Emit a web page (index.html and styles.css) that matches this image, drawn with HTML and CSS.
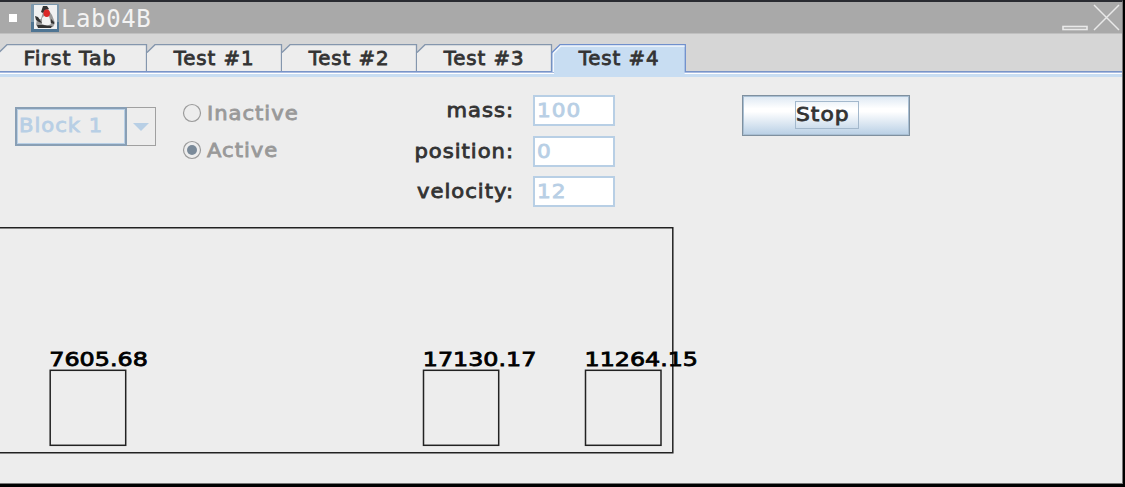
FILE: index.html
```html
<!DOCTYPE html>
<html lang="en">
<head>
<meta charset="utf-8">
<title>Lab04B</title>
<link rel="stylesheet" href="styles.css">
</head>
<body>
<div class="window">
  <header class="titlebar">
    <span class="dot"></span>
    <svg class="app-icon" width="28" height="28" viewBox="0 0 28 28">
      <rect x="0" y="0" width="28" height="28" rx="1" fill="#7c98ad"/>
      <rect x="0" y="18" width="28" height="10" fill="#4f7593"/>
      <rect x="3" y="1" width="23" height="24" fill="#f0f1f2"/>
      <path d="M13 5L17 5L21 11L24 19L22 23L8 24L5 21L6 15L10 15Z" fill="#999"/>
      <path d="M11 14L14 11L18 12L20 20L16 22L11 20Z" fill="#f2f2f2"/>
      <path d="M12 2L16 2L18 5L14 6L12 9L10 8ZM4 12L7 13L9 16L11 19L8 18L5 16ZM20 15L23 18L23 20L20 19ZM6 21L12 21L21 22L20 24L7 24Z" fill="#333"/>
      <ellipse cx="15.7" cy="9.3" rx="3.2" ry="3.8" fill="#dc2727"/>
    </svg>
    <h1 class="title">Lab04B</h1>
    <svg class="controls" width="60" height="31" viewBox="0 0 60 31" fill="none" stroke="#e9e9e9">
      <rect x="1" y="24.5" width="24" height="3" stroke-width="1.6"/>
      <path d="M32 3L57 28M57 3L32 28" stroke-width="1.5"/>
    </svg>
  </header>
  <nav class="tabs">
    <div class="tab first"><svg viewBox="0 0 147 28"><path class="face" d="M-1 27V8.5L7 .7H146.5V27Z"/><path d="M-1 8.5L7 .7H146.5V27"/></svg><span>First Tab</span></div>
    <div class="tab"><svg viewBox="0 0 135 28"><path class="face" d="M0 27V8.5L8 .7H134.5V27Z"/><path d="M0 8.5L8 .7H134.5V27"/></svg><span>Test #1</span></div>
    <div class="tab"><svg viewBox="0 0 135 28"><path class="face" d="M0 27V8.5L8 .7H134.5V27Z"/><path d="M0 8.5L8 .7H134.5V27"/></svg><span>Test #2</span></div>
    <div class="tab"><svg viewBox="0 0 135 28"><path class="face" d="M0 27V8.5L8 .7H134.5V27Z"/><path d="M0 8.5L8 .7H134.5V27"/></svg><span>Test #3</span></div>
    <div class="tab selected"><svg viewBox="0 0 135 28"><path class="face" d="M0 28V8.5L8 .7H133.3V28H132.6V33H2V28Z"/><path d="M0 28V8.5L8 .7H133.3V28"/><path class="shine" d="M1.3 28V9.5L8.5 2.2H132.6"/></svg><span>Test #4</span></div>
  </nav>
  <main class="panel">
    <section class="form">
      <div class="combo"><div class="combo-value"><span class="wide">Block 1</span></div><span class="combo-arrow"><svg width="16" height="8" viewBox="0 0 16 8"><path d="M0 0H16L8 8Z" fill="#b8cfe5"/></svg></span></div>
      <div class="radios">
        <div class="radio"><svg width="20" height="20" viewBox="0 0 20 20"><circle cx="10" cy="10" r="8.5"/></svg><span class="wide">Inactive</span></div>
        <div class="radio"><svg width="20" height="20" viewBox="0 0 20 20"><circle cx="10" cy="10" r="8.5"/><circle class="bullet" cx="10" cy="10" r="5"/></svg><span class="wide">Active</span></div>
      </div>
      <div class="fields">
        <label class="wide">mass:</label><div class="field"><span class="wide">100</span></div>
        <label class="wide">position:</label><div class="field"><span class="wide">0</span></div>
        <label class="wide">velocity:</label><div class="field"><span class="wide">12</span></div>
      </div>
      <button class="stop"><span class="focus"><span class="wide">Stop</span></span></button>
    </section>
    <svg class="track" width="720" height="230" viewBox="0 225 720 230">
      <path d="M0 227.8H672.8V452.7H0"/>
      <rect x="50.2" y="370.3" width="75.5" height="75"/>
      <rect x="423.5" y="370.3" width="75.2" height="75"/>
      <rect x="585.5" y="370.3" width="75.5" height="75"/>
      <text x="49.3" y="366" textLength="98.5" lengthAdjust="spacingAndGlyphs">7605.68</text>
      <text x="422.8" y="366" textLength="113.5" lengthAdjust="spacingAndGlyphs">17130.17</text>
      <text x="584.5" y="366" textLength="113.5" lengthAdjust="spacingAndGlyphs">11264.15</text>
    </svg>
  </main>
</div>
</body>
</html>
```
FILE: styles.css
```css
* { box-sizing: border-box; }
body {
  margin: 0;
  width: 1125px;
  height: 487px;
  overflow: hidden;
  background: #000;
  font-family: "DejaVu Sans", sans-serif;
  font-size: 19.3px;
  letter-spacing: 0.9px;
  color: #333;
  -webkit-text-stroke: 0.8px currentColor;
}
.wide {
  display: inline-block;
  transform: scaleX(1.095);
  transform-origin: left;
}
.window {
  width: 1123px;
  height: 484px;
  border-top: 2px solid #292b31;
  border-right: 1px solid #777;
  border-bottom: 1px solid #777;
  background: #ededed;
}
.titlebar {
  display: flex;
  align-items: center;
  height: 31px;
  background: #a9a9a9;
}
.dot { width: 8px; height: 8px; margin-left: 9px; background: #fff; }
.app-icon { margin-left: 14px; }
.title {
  margin: 4px 0 0 2px;
  font: 24px/31px "DejaVu Sans Mono", monospace;
  letter-spacing: 0.6px;
  color: #f3f3f3;
  -webkit-text-stroke: 0;
}
.controls { margin-left: auto; }
.tabs {
  display: flex;
  align-items: flex-end;
  height: 44px;
  padding-bottom: 5px;
  background: linear-gradient(#c0c0c0 0 1px, #d6d6d6 1px 38px, #7894c8 38px 39px, #a9bbe0 39px 40px, #fff 40px 41px, #c8ddf2 41px);
}
.tab { display: grid; width: 135px; height: 28px; }
.tab.first { width: 147px; }
.tab > * { grid-area: 1 / 1; }
.tab svg {
  width: 100%;
  height: 28px;
  overflow: visible;
  fill: none;
  stroke: #8496ad;
  stroke-width: 1.3;
}
.tab .face { fill: #ededed; stroke: none; }
.tab span {
  padding-left: 26px;
  line-height: 29px;
  white-space: nowrap;
  transform: scaleX(1.025);
  transform-origin: left;
}
.tab.first span { padding-left: 22px; transform: scaleX(1.065); }
.tab.selected svg { stroke: #6f8fcc; }
.tab.selected .face { fill: #c8ddf2; }
.tab .shine { stroke: #f4f8fd; }
.panel { height: 406px; }
.form {
  display: grid;
  grid-template-columns: 141px 150px 310px 168px;
  align-items: start;
  height: 148px;
  padding: 18px 0 0 15px;
}
.combo {
  display: flex;
  width: 141px;
  height: 39px;
  margin-top: 12px;
  border: 1.5px solid #a0a0a0;
  color: #b8cfe5;
}
.combo-value {
  width: 112px;
  margin: -1px;
  padding-left: 2px;
  border: 2px solid #899fb5;
  box-shadow: inset 0 0 0 1px #b8cfe5;
  line-height: 34px;
  white-space: nowrap;
}
.combo-arrow { display: grid; flex: 1; place-items: center; }
.radios {
  display: grid;
  gap: 9.5px;
  padding: 4px 0 0 26px;
  color: #999;
}
.radio { display: flex; align-items: center; gap: 5px; height: 28px; }
.radio svg { margin-top: -1px; fill: none; stroke: #9b9b9b; stroke-width: 1.2; }
.radio .bullet { fill: #7a8a99; stroke: none; }
.fields {
  display: grid;
  grid-template-columns: 208px 82px;
  column-gap: 19px;
  row-gap: 9.5px;
}
.fields label { line-height: 31px; text-align: right; transform-origin: right; }
.field {
  height: 31px;
  padding-left: 2px;
  border: 2px solid #b8cfe5;
  background: #fff;
  color: #b8cfe5;
  line-height: 28px;
}
.field .wide { transform: scaleX(1.12); }
.stop {
  display: grid;
  place-items: center;
  width: 168px;
  height: 41px;
  margin-left: 126px;
  padding: 0 0 1px 2px;
  border: 1.5px solid #7f909f;
  box-shadow: inset 0 0 0 1px #a9bfd3;
  background: linear-gradient(#dde8f3, #fff 32%, #fff 40%, #b8cfe5);
  font: inherit;
  letter-spacing: inherit;
  color: #333;
}
.focus {
  width: 64px;
  height: 28px;
  border: 1px solid #a3b8cc;
  line-height: 26px;
  text-align: left;
}
.focus .wide { transform: scaleX(1.13); }
.track { display: block; fill: none; stroke: #222; stroke-width: 1.5; }
.track text { fill: #000; stroke: #000; stroke-width: 0.8px; -webkit-text-stroke: 0; stroke: #000; letter-spacing: 0; }
```
